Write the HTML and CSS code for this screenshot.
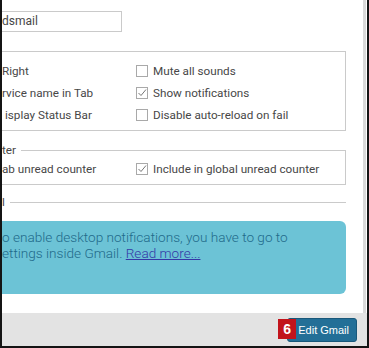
FILE: index.html
```html
<!DOCTYPE html>
<html lang="en">
<head>
  <meta charset="UTF-8">
  <title>Edit Gmail</title>
  <link rel="stylesheet" href="styles.css">
</head>
<body>
  <div class="window">
    <div class="panel">
      <div class="content">
        <div class="name-field">dsmail</div>

        <fieldset class="group group-options">
          <div class="opt-grid">
            <span class="opt">Right</span>
            <label class="opt"><span class="check"></span>Mute all sounds</label>
            <span class="opt">rvice name in Tab</span>
            <label class="opt">
              <span class="check">
                <svg viewBox="0 0 12 12" width="12" height="12"><polyline points="2.5,6 5,8.5 10,2.5" fill="none" stroke="#777" stroke-width="1"/></svg>
              </span>Show notifications
            </label>
            <span class="opt opt-partial">isplay Status Bar</span>
            <label class="opt"><span class="check"></span>Disable auto-reload on fail</label>
          </div>
        </fieldset>

        <fieldset class="group group-counter">
          <legend>ter</legend>
          <div class="opt-grid">
            <span class="opt">ab unread counter</span>
            <label class="opt">
              <span class="check">
                <svg viewBox="0 0 12 12" width="12" height="12"><polyline points="2.5,6 5,8.5 10,2.5" fill="none" stroke="#777" stroke-width="1"/></svg>
              </span>Include in global unread counter
            </label>
          </div>
        </fieldset>

        <fieldset class="group group-empty">
          <legend>l</legend>
        </fieldset>

        <div class="alert">
          o enable desktop notifications, you have to go to<br>
          ettings inside Gmail. <a href="#" class="alert-link">Read more...</a>
        </div>
      </div>
      <div class="scrollbar"></div>
    </div>

    <div class="footer">
      <button class="btn-edit"><span class="badge">6</span>Edit Gmail</button>
    </div>
  </div>
</body>
</html>
```

FILE: styles.css
```css
:root {
  --frame: #141414;
  --line: #cacaca;
  --text: #474747;
  --info-bg: #6cc3d6;
  --info-text: #1f6a8a;
  --footer-bg: #e3e3e3;
  --btn-bg: #236f97;
  --badge-bg: #c2141c;
}

* {
  box-sizing: border-box;
}

body {
  margin: 0;
  background: #fff;
  font-family: Roboto, "Noto Sans", sans-serif;
  color: var(--text);
}

.window {
  width: 369px;
  height: 348px;
  display: flex;
  flex-direction: column;
  border-left: 2px solid var(--frame);
  border-right: 2px solid var(--frame);
  border-bottom: 2px solid var(--frame);
  overflow: hidden;
}

.panel {
  flex: 1;
  display: flex;
  min-height: 0;
}

.content {
  flex: 1;
  overflow: hidden;
  padding: 11px 17px 0 0;
}

.scrollbar {
  width: 3px;
  margin-right: 1px;
  background: #d9d9d9;
}

/* name input */
.name-field {
  width: 120px;
  height: 21px;
  border: 1px solid var(--line);
  border-left: 0;
  font-size: 12px;
  line-height: 19px;
  margin-bottom: 19px;
}

/* fieldsets */
.group {
  margin: 0;
  padding: 0;
  border: 1px solid var(--line);
  border-left: 0;
  min-width: 0;
}

.group legend {
  padding: 0 5px 0 0;
  font-size: 11.7px;
  line-height: 14px;
}

.group-options {
  padding: 8px 0 4px;
  margin-bottom: 12px;
}

.group-counter {
  padding: 1px 0 4px;
}

.group-empty {
  height: 8px;
  border-bottom: 0;
  border-right: 0;
  margin-top: 10px;
}

.opt-grid {
  display: grid;
  grid-template-columns: 134px 1fr;
}

.opt {
  display: flex;
  align-items: center;
  height: 22px;
  font-size: 11.7px;
  white-space: nowrap;
}

.opt-partial {
  padding-left: 3px;
}

.check {
  width: 12px;
  height: 12px;
  margin-right: 5px;
  border: 1px solid #a9a9a9;
  background: #fff;
  display: inline-flex;
}

.check svg {
  margin: -1px;
}

/* info alert */
.alert {
  margin-top: 12px;
  height: 73px;
  padding-top: 8px;
  background: var(--info-bg);
  border-radius: 0 6px 6px 0;
  color: var(--info-text);
  font-size: 13.6px;
  font-weight: 300;
  line-height: 16px;
  white-space: nowrap;
}

.alert-link {
  color: #3438a6;
}

/* footer */
.footer {
  height: 33px;
  background: var(--footer-bg);
  display: flex;
  justify-content: flex-end;
  align-items: center;
  padding-right: 10px;
}

.btn-edit {
  position: relative;
  height: 24px;
  padding: 0 7px 0 10px;
  background: var(--btn-bg);
  border: 1px solid #19587a;
  border-radius: 3px;
  color: #fff;
  font-family: "Liberation Sans", Arial, sans-serif;
  font-size: 11px;
}

.badge {
  position: absolute;
  left: -10px;
  top: 0;
  width: 18px;
  height: 20px;
  background: var(--badge-bg);
  color: #fff;
  font-weight: bold;
  font-size: 14px;
  line-height: 20px;
  text-align: center;
}
```
